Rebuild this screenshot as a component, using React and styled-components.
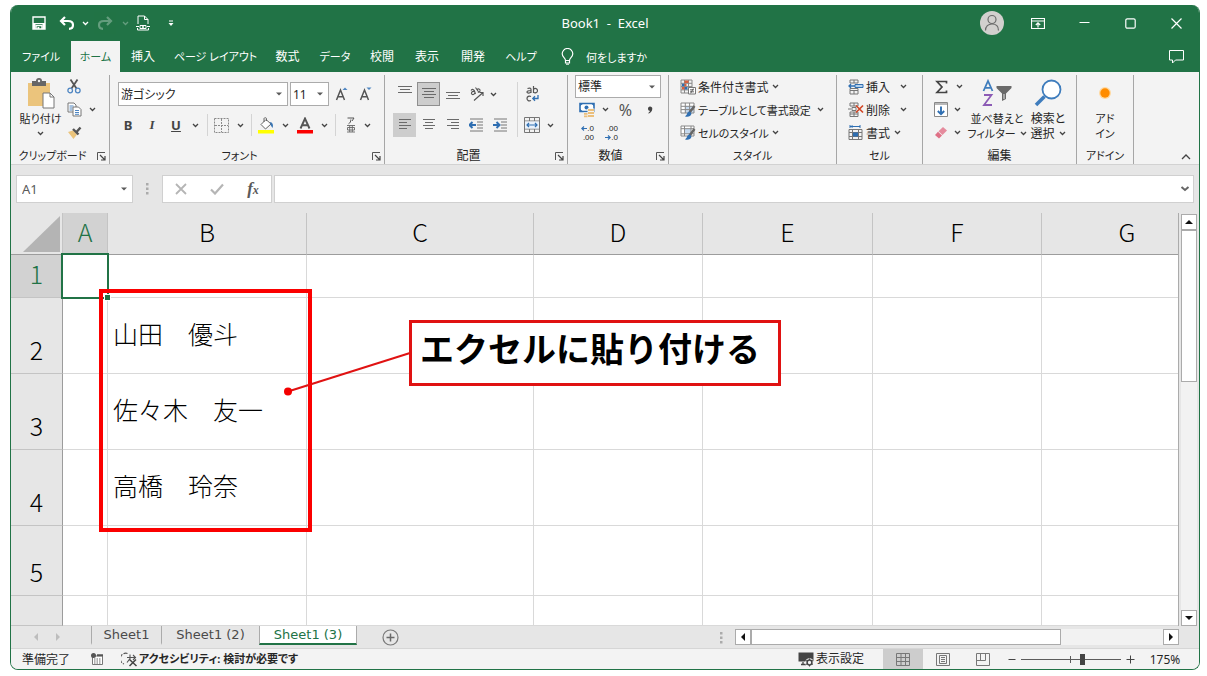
import React from 'react'
import styled, { createGlobalStyle } from 'styled-components';

const GlobalStyle = createGlobalStyle`
    * {
        box-sizing: border-box;
    }

    body {
        margin: 0;
        background: #ffffff;
        font-family: "Noto Sans", "Noto Sans CJK JP", sans-serif;
        font-size: 12px;
        font-feature-settings: "palt";
        color: #262626;
    }

    button, input, select {
        margin: 0;
        padding: 0;
        border: 0;
        background: transparent;
        color: inherit;
        font: inherit;
        font-feature-settings: inherit;
    }

    svg {
        display: block;
        flex: none;
    }
`;

const Window = styled.div`
    margin: 5px 7px 6px 10px;

    border: 1px solid #217346;
    border-top: 0;
    border-radius: 8px;

    background: #e6e6e6;
    overflow: hidden;
`;

/* ---------- title bar ---------- */

const TitleBar = styled.header`
    height: 36px;

    display: grid;
    grid-template-columns: 1fr auto 1fr;
    align-items: center;

    background: #217346;
    color: #ffffff;
`;

const QuickAccess = styled.div`
    padding-left: 16px;

    display: flex;
    align-items: center;
`;

const Title = styled.h1`
    margin: 0;

    font-size: 13px;
    font-weight: 400;
    white-space: pre;
`;

const WindowButtons = styled.div`
    display: flex;
    justify-content: flex-end;
`;

const Tool = styled.button`
    width: ${({ $w }) => $w || 24}px;
    height: ${({ $h }) => $h || 24}px;

    display: flex;
    flex: none;
    align-items: center;
    justify-content: center;

    background: ${({ $on }) => ($on ? '#cdcdcd' : 'transparent')};
    border: ${({ $edge }) => ($edge ? '1px solid #8f8f8f' : '0')};
    opacity: ${({ $dim }) => ($dim ? 0.3 : 1)};
`;

/* ---------- menu tabs ---------- */

const MenuTabs = styled.nav`
    height: 31px;

    display: flex;
    align-items: stretch;

    background: #217346;
    color: #ffffff;
`;

const MenuTab = styled.button`
    width: ${({ $w }) => $w}px;

    flex: none;
    font-size: ${({ $small }) => ($small ? 11 : 12)}px;
    line-height: 29px;
    white-space: nowrap;
    background: ${({ $active }) => ($active ? '#f3f3f3' : 'transparent')};
    color: ${({ $active }) => ($active ? '#217346' : '#ffffff')};
`;

const TellMe = styled.button`
    margin-left: 15px;

    display: flex;
    align-items: center;
    gap: 12px;

    font-size: 11px;
`;

const CommentButton = styled(Tool)`
    margin-left: auto;
`;

/* ---------- ribbon ---------- */

const Ribbon = styled.section`
    height: 93px;
    padding: 3px 0 0;

    display: flex;

    background: #f3f3f3;
    border-bottom: 1px solid #d2d2d2;
`;

const Group = styled.div`
    width: ${({ $w }) => $w}px;

    display: flex;
    flex: none;
    flex-direction: column;
    justify-content: space-between;

    border-right: 1px solid #a6a6a6;
`;

const GroupBody = styled.div`
    height: 70px;
    padding-left: ${({ $left }) => $left || 0}px;

    display: flex;
    flex-direction: ${({ $column }) => ($column ? 'column' : 'row')};
`;

const GroupFooter = styled.div`
    height: 16px;

    display: flex;
    align-items: center;

    font-size: ${({ $small }) => ($small ? 11 : 12)}px;
    line-height: 16px;
    text-align: center;
    white-space: nowrap;

    & > span {
        flex: 1;
    }
`;

const Stack = styled.div`
    padding-top: ${({ $top }) => $top || 0}px;

    display: flex;
    flex-direction: column;
    gap: ${({ $gap }) => $gap || 0}px;
`;

const Row = styled.div`
    padding-left: ${({ $left }) => $left || 0}px;

    display: flex;
    align-items: center;
    gap: ${({ $gap }) => $gap || 0}px;
`;

const Divider = styled.span`
    width: 1px;
    height: ${({ $h }) => $h || 22}px;
    margin: ${({ $m }) => $m || '0 5px'};

    flex: none;
    background: #d4d4d4;
`;

const BigButton = styled.button`
    width: ${({ $w }) => $w}px;
    height: 70px;

    display: flex;
    flex: none;
    flex-direction: column;
    align-items: center;

    font-size: ${({ $small }) => ($small ? 11 : 12)}px;
    line-height: 15px;
    white-space: nowrap;
`;

const BigIcon = styled.span`
    height: 36px;

    display: flex;
    align-items: center;
`;

const Inline = styled.span`
    min-height: 15px;

    display: flex;
    align-items: center;
    gap: 4px;
`;

const LabelButton = styled.button`
    height: 23px;

    display: flex;
    align-items: center;
    gap: 2px;

    font-size: ${({ $small }) => ($small ? 11 : 12)}px;
    white-space: nowrap;

    & > svg:last-child {
        margin-left: ${({ $gap }) => $gap || 1}px;
    }
`;

const Letter = styled.span`
    font-size: 13px;
    font-weight: 700;
    font-style: ${({ $italic }) => ($italic ? 'italic' : 'normal')};
    font-family: ${({ $italic }) => ($italic ? '"Liberation Serif", serif' : '"Noto Sans", sans-serif')};
    text-decoration: ${({ $underline }) => ($underline ? 'underline' : 'none')};
    color: #444444;
`;

const PercentSign = styled.span`
    font-size: 16px;
    color: #555555;
`;

const SelectFrame = styled.span`
    width: ${({ $w }) => $w}px;
    height: ${({ $h }) => $h || 24}px;

    display: grid;
    align-items: center;

    background: #ffffff;
    border: 1px solid ${({ $light }) => ($light ? '#d0d0d0' : '#ababab')};

    & > * {
        grid-area: 1 / 1;
    }

    & > svg {
        margin-right: 5px;
        justify-self: end;
        pointer-events: none;
    }

    select, input {
        width: 100%;
        height: 100%;
        padding-left: ${({ $light }) => ($light ? 5 : 2)}px;
        appearance: none;
        outline: none;
        font-size: ${({ $light }) => ($light ? 13 : 12)}px;
    }
`;

/* ---------- formula bar ---------- */

const FormulaBar = styled.div`
    height: 48px;
    padding: 10px 5px;

    display: flex;
    align-items: stretch;

    color: #5a5a5a;
`;

const FormulaTools = styled.div`
    width: 110px;

    display: flex;
    align-items: center;
    justify-content: space-around;

    background: #ffffff;
    border: 1px solid #d0d0d0;
`;

const FormulaField = styled.div`
    margin-left: 2px;
    padding-right: 3px;

    display: flex;
    flex: 1;
    align-items: center;

    background: #ffffff;
    border: 1px solid #d0d0d0;

    input {
        flex: 1;
        height: 100%;
        outline: none;
    }
`;

const FxLabel = styled.i`
    font-family: "Liberation Serif", serif;
    font-size: 17px;
    font-weight: 700;

    small {
        font-size: 12px;
    }
`;

/* ---------- sheet ---------- */

const SheetArea = styled.main`
    position: relative;

    display: flex;
`;

const SheetView = styled.div`
    flex: 1;
    min-width: 0;

    overflow: hidden;
    border-right: 1px solid #ababab;
`;

const SheetTable = styled.table`
    width: 1202px;

    table-layout: fixed;
    border-collapse: separate;
    border-spacing: 0;

    font-family: "Noto Sans CJK JP", sans-serif;
    font-size: 25px;
    font-weight: 300;
    color: #000000;

    th {
        font-weight: 300;
    }
`;

const ColumnHead = styled.th`
    height: 42px;
    padding: 0 0 4px;

    border-bottom: 1px solid #9c9c9c;
    border-right: 1px solid #c4c4c4;

    line-height: 37px;
    background: ${({ $active }) => ($active ? '#d2d2d2' : '#e6e6e6')};
    color: ${({ $active }) => ($active ? '#217346' : '#000000')};
`;

const CornerHead = styled(ColumnHead)`
    padding: 3px 2px 2px;

    svg {
        margin-left: auto;
    }
`;

const RowHead = styled.th`
    padding: 0 0 6px;

    border-right: 1px solid #9c9c9c;
    border-bottom: 1px solid #c4c4c4;

    line-height: 36px;
    vertical-align: bottom;
    background: ${({ $active }) => ($active ? '#d2d2d2' : '#e6e6e6')};
    color: ${({ $active }) => ($active ? '#217346' : '#000000')};
`;

const SheetRow = styled.tr`
    height: ${({ $h }) => $h}px;
`;

const Cell = styled.td`
    position: relative;
    padding: 0 0 6px 5px;

    background: #ffffff;
    border-right: 1px solid #d9d9d9;
    border-bottom: 1px solid #d9d9d9;

    font-feature-settings: normal;
    line-height: 30px;
    white-space: nowrap;
`;

const Selection = styled.span`
    position: absolute;
    top: -2px;
    right: -2px;
    bottom: -2px;
    left: -2px;
    z-index: 1;

    border: 2px solid #217346;

    &::after {
        content: '';
        position: absolute;
        right: -3px;
        bottom: -3px;

        width: 5px;
        height: 5px;

        background: #217346;
        outline: 1px solid #ffffff;
    }
`;

const Highlight = styled.div`
    position: absolute;
    top: 76px;
    left: 88px;
    z-index: 2;

    width: 213px;
    height: 243px;

    border: 4px solid #fb0000;
`;

const Pointer = styled.svg`
    position: absolute;
    top: 134px;
    left: 272px;
    z-index: 3;
`;

const Callout = styled.div`
    position: absolute;
    top: 107px;
    left: 398px;
    z-index: 3;

    width: 372px;
    padding: 0 0 10px 8px;

    background: #ffffff;
    border: 3px solid #e01212;

    font-family: "Noto Sans CJK JP", sans-serif;
    font-size: 34px;
    font-weight: 700;
    font-feature-settings: normal;
    line-height: 50px;
    white-space: nowrap;
    color: #000000;
`;

const VerticalScroll = styled.div`
    width: 16px;
    margin: 1px 2px 0;

    display: flex;
    flex: none;
    flex-direction: column;

    background: #f2f2f2;
`;

const ScrollButton = styled.button`
    width: 16px;
    height: 16px;

    display: flex;
    flex: none;
    align-items: center;
    justify-content: center;

    background: #ffffff;
    border: 1px solid #ababab;
`;

const ScrollThumb = styled.div`
    background: #ffffff;
    border: 1px solid #ababab;
`;

const VerticalThumb = styled(ScrollThumb)`
    height: 152px;
    margin-bottom: auto;
`;

/* ---------- sheet tabs ---------- */

const SheetTabs = styled.div`
    height: 22px;

    display: flex;
    align-items: flex-start;
`;

const NavArrows = styled.div`
    width: 80px;
    height: 22px;
    padding-left: 14px;

    display: flex;
    align-items: center;
`;

const SheetTab = styled.button`
    width: ${({ $w }) => $w}px;
    height: 19px;

    flex: none;

    background: ${({ $active }) => ($active ? '#ffffff' : 'transparent')};
    border-left: 1px solid #ababab;
    border-right: ${({ $active }) => ($active ? '1px solid #ababab' : '0')};
    border-bottom: 2px solid ${({ $active }) => ($active ? '#217346' : 'transparent')};

    font-family: "DejaVu Sans", sans-serif;
    font-size: 13px;
    line-height: 16px;
    color: ${({ $active }) => ($active ? '#217346' : '#4a4a4a')};
`;

const HorizontalScroll = styled.div`
    width: 444px;
    margin: 3px 20px 0 0;

    display: flex;

    background: #f2f2f2;
`;

const HorizontalThumb = styled(ScrollThumb)`
    width: 310px;
    margin-right: auto;
`;

const SplitDots = styled.span`
    width: 3px;
    margin: 6px 12px 0 auto;
`;

/* ---------- status bar ---------- */

const StatusBar = styled.footer`
    height: 21px;
    padding-left: 11px;

    display: flex;
    align-items: center;

    background: #f3f3f3;
    border-top: 1px solid #d6d6d6;
`;

const StatusText = styled.span`
    width: 69px;
`;

const StatusButton = styled.button`
    margin-left: ${({ $left }) => $left || 0}px;

    display: flex;
    align-items: center;
    gap: 1px;

    font-size: ${({ $bold }) => ($bold ? 11 : 12)}px;
    font-weight: ${({ $bold }) => ($bold ? 700 : 400)};
    line-height: 18px;
    white-space: nowrap;
`;

const StatusRight = styled.div`
    margin-left: auto;
    padding-right: 8px;

    display: flex;
    align-items: center;
`;

const ViewButtons = styled.div`
    margin-left: 19px;

    display: flex;
`;

const ZoomSlider = styled.input`
    width: 100px;
    height: 14px;

    appearance: none;
    background:
        linear-gradient(#5c5c5c, #5c5c5c) 0 7px / 100% 1px no-repeat,
        linear-gradient(#5c5c5c, #5c5c5c) 49px 4px / 1px 7px no-repeat;

    &::-webkit-slider-thumb {
        appearance: none;
        width: 5px;
        height: 11px;
        background: #444444;
    }
`;

const ZoomValue = styled.span`
    width: 52px;

    text-align: center;
`;

/* ---------- icons ---------- */

const Icon = ({ w = 16, h = 16, children, ...rest }) => (
    <svg width={w} height={h} viewBox={`0 0 ${w} ${h}`} fill="none" aria-hidden="true" {...rest}>
        {children}
    </svg>
);

const Caret = ({ color = '#444444' }) => (
    <Icon w={7} h={5}>
        <path d="M1 1l2.5 2.5L6 1" stroke={color} strokeWidth="1.3" />
    </Icon>
);

const SmallArrow = () => (
    <Icon w={6} h={4}>
        <path d="M0 0.5h6L3 3.5z" fill="#5a5a5a" />
    </Icon>
);

const Arrow = ({ dir, color = '#111111' }) => {
    const d = {
        up: 'M4 2l4 4H0z',
        down: 'M0 2h8L4 6z',
        left: 'M6 0v8L2 4z',
        right: 'M2 0v8l4-4z',
    }[dir];
    return <Icon w={8} h={8}><path d={d} fill={color} /></Icon>;
};

const SaveIcon = () => (
    <Icon w={14} h={14}>
        <path d="M1 1h12v12H1z" stroke="#fff" strokeWidth="1.4" />
        <path d="M1 7.500h12" stroke="#fff" strokeWidth="1.2" />
        <path d="M1 8h2.500v5H1zM10.500 8H13v5h-2.500z" fill="#fff" />
        <path d="M4 13V9.500h6V13" stroke="#fff" strokeWidth="1.4" />
        <path d="M5.500 11h1.800v2H5.500z" fill="#fff" />
    </Icon>
);

const UndoIcon = ({ flip }) => (
    <Icon w={16} h={14}>
        <g transform={flip ? 'matrix(-1 0 0 1 16 0)' : undefined} stroke="#fff" strokeWidth="2.200">
            <path d="M6 1L2 5l4 4" />
            <path d="M2 5h7c3.300 0 5 1.500 5 4 0 2.300-1.500 3.800-4 3.800" />
        </g>
    </Icon>
);

const PreviewIcon = () => (
    <Icon w={14} h={16}>
        <path d="M2 9V1h6.500L12 4.500V9M8.500 1v3.500H12" stroke="#fff" />
        <path d="M0 11.500h3M11 11.500h3M1.500 13v2h11v-2" stroke="#fff" />
        <path d="M4 10.500h6v3H4z" stroke="#fff" />
        <circle cx="7" cy="12" r="1" fill="#fff" />
    </Icon>
);

const CustomizeIcon = () => (
    <Icon w={6} h={7}>
        <path d="M1 1h4" stroke="#fff" />
        <path d="M0.500 3h5L3 6z" fill="#fff" />
    </Icon>
);

const AvatarIcon = () => (
    <Icon w={24} h={24}>
        <circle cx="12" cy="12" r="12" fill="#d2d0ce" />
        <circle cx="12" cy="8.500" r="4" stroke="#6b6b6b" strokeWidth="1.200" />
        <path d="M5.500 19.500c0-4.200 2.700-6.500 6.500-6.500s6.500 2.300 6.500 6.500" stroke="#6b6b6b" strokeWidth="1.200" />
    </Icon>
);

const RibbonModeIcon = () => (
    <Icon w={14} h={11}>
        <path d="M0.500 0.500h13v10H0.500zM0.500 3h13" stroke="#fff" strokeWidth="1.200" />
        <path d="M7 9.500V5M4.800 7L7 4.800 9.200 7" stroke="#fff" strokeWidth="1.200" />
    </Icon>
);

const BulbIcon = () => (
    <Icon w={13} h={17}>
        <path d="M4.500 12.500c0-2.500-3.300-3.300-3.300-6.700a5.300 5.300 0 0 1 10.600 0c0 3.400-3.300 4.200-3.300 6.700zM4.500 12.500v2.500h4v-2.500" stroke="#fff" strokeWidth="1.200" />
        <path d="M5 16.200h3" stroke="#fff" />
    </Icon>
);

const CommentIcon = () => (
    <Icon w={15} h={14}>
        <path d="M0.500 0.500h14v9.500H6.500L3.500 13v-3h-3z" stroke="#fff" />
    </Icon>
);

const PasteIcon = () => (
    <Icon w={28} h={31}>
        <path d="M1 5h22v23H1z" fill="#ebc47c" />
        <path d="M5 3h4a3 3 0 0 1 6 0h4v5H5z" fill="#666" />
        <circle cx="12" cy="3" r="1.200" fill="#f3f3f3" />
        <path d="M16 15h7l4 4v11H16z" fill="#fff" stroke="#777" />
        <path d="M23 15v4h4" stroke="#777" />
    </Icon>
);

const CutIcon = () => (
    <Icon w={14} h={15}>
        <path d="M3.500 0.500l6 9M10.500 0.500l-6 9" stroke="#555" strokeWidth="1.800" />
        <circle cx="3.200" cy="11.500" r="2.300" stroke="#4f86c2" strokeWidth="1.300" />
        <circle cx="10.800" cy="11.500" r="2.300" stroke="#4f86c2" strokeWidth="1.300" />
    </Icon>
);

const CopyIcon = () => (
    <Icon w={15} h={15}>
        <path d="M1 1h6l2 2v7H1z" fill="#fff" stroke="#777" />
        <path d="M2.500 4h4M2.500 6h3M2.500 8h3" stroke="#4f86c2" />
        <path d="M6 5h5.500L14 7.500V14H6z" fill="#fff" stroke="#777" />
        <path d="M8 8.500h4M8 10.500h4M8 12.300h4" stroke="#4f86c2" />
    </Icon>
);

const BrushIcon = () => (
    <Icon w={15} h={13}>
        <path d="M1 6l5-1.500 4 4L6.500 13z" fill="#ebc47c" />
        <path d="M6 3l5.500 5.500M9.500 6L13.500 1.500" stroke="#555" strokeWidth="2.400" />
    </Icon>
);

const LauncherIcon = () => (
    <Icon w={9} h={9}>
        <path d="M0.500 8V0.500H8" stroke="#555" />
        <path d="M3 3l4.500 4.500M8 4v4H4" stroke="#444" strokeWidth="1.200" />
    </Icon>
);

const GrowFontIcon = ({ down }) => (
    <Icon w={14} h={16}>
        <path d="M1.500 14L5.500 4l4 10M3 10.800h5" stroke="#555" strokeWidth="1.500" />
        <path d={down ? 'M7.500 1.500h5L10 4z' : 'M7.500 4h5L10 1.500z'} fill="#4f86c2" />
    </Icon>
);

const BordersIcon = () => (
    <Icon w={15} h={15}>
        <path d="M0.500 0.500h14v14H0.500zM7.500 1v13M1 7.500h13" stroke="#8a8a8a" strokeDasharray="2 1" />
    </Icon>
);

const FillIcon = () => (
    <Icon w={17} h={17}>
        <path d="M3 7.500L8 2.500l5 4.500-5.500 5z" fill="#fff" stroke="#666" />
        <path d="M6 5V1.500c0-1 2.500-1 2.500 0V4" stroke="#666" />
        <path d="M12 5c3 .5 3.500 3.500 2.500 6l-2-3z" fill="#3b76b4" />
        <path d="M0 13h16v3.500H0z" fill="#ffff00" />
    </Icon>
);

const FontColorIcon = () => (
    <Icon w={16} h={17}>
        <path d="M3.500 11.500L8 1.500l4.500 10M5 8.200h6" stroke="#555" strokeWidth="1.900" />
        <path d="M0 13h16v3.500H0z" fill="#fb0000" />
    </Icon>
);

const RubyIcon = () => (
    <Icon w={10} h={16}>
        <path d="M1.500 1h6.500L6 4M4.800 2.500c0 2-.5 3.500-2.300 4.300" stroke="#555" />
        <path d="M1 8.500h8M1 15h8M3.700 8.500V15M6.300 8.500V15M1.500 10.500h7v2.500h-7z" stroke="#666" strokeWidth="0.900" />
    </Icon>
);

const LinesIcon = ({ rows, align }) => (
    <Icon w={14} h={rows.length * 3 + 1}>
        {rows.map((len, i) => {
            const x = align === 'left' ? 1 : align === 'right' ? 13 - len : (14 - len) / 2;
            return <path key={i} d={`M${x} ${i * 3 + 0.5}h${len}`} stroke="#6a6a6a" />;
        })}
    </Icon>
);

const OrientationIcon = () => (
    <Icon w={16} h={16}>
        <path d="M2 4.500c1.500-2 3-1 3.500.5L6.500 8M5.500 5.500C3 5 1.500 7 3 8.300c1.200.9 2.800-.3 2.700-1.700M6.500 1.500l3.500 5M8 4c1-2 3.500-1 3 1-.3 1-1.500 1.500-2 1" stroke="#555" strokeWidth="1.100" />
        <path d="M5 14.500l9-8M10.500 6.500H14V10" stroke="#555" strokeWidth="1.200" />
    </Icon>
);

const IndentIcon = ({ inward }) => (
    <Icon w={15} h={14}>
        <path d="M1 1h13M8 4h6M8 7h6M8 10h6M1 13h13" stroke="#777" />
        <path d={inward ? 'M0 7h6M3.500 4L6.500 7l-3 3' : 'M1 7h6M3.500 4L0.500 7l3 3'} stroke="#2f6fb2" strokeWidth="2" />
    </Icon>
);

const WrapIcon = () => (
    <Icon w={13} h={16}>
        <g stroke="#555" strokeWidth="1.200">
            <path d="M1.500 2.500c3-1 3.500 0 3.500 1V7M5 4.500c-3 0-4 .5-4 1.500 0 1.500 3 1.300 4 0M7.500 0v7M7.500 3.500c1.500-2 4-.8 4 1.200s-2.500 2.800-4 1.500" />
            <path d="M5 10.500c-2-1-4 0-4 2s2 3 4 2" />
        </g>
        <path d="M12 9v3.500H7M9 10.300L6.800 12.500 9 14.700" stroke="#2f6fb2" strokeWidth="1.300" />
    </Icon>
);

const MergeIcon = () => (
    <Icon w={16} h={16}>
        <path d="M0.500 0.500h15v15H0.500zM0.500 4h15M0.500 12h15M5.500 0.500V4M10.500 0.500V4M5.500 12v3.500M10.500 12v3.500" stroke="#777" />
        <path d="M1 4.500h14v7H1z" fill="#eaf2fb" />
        <path d="M3 8h10M5 6L3 8l2 2M11 6l2 2-2 2" stroke="#2f6fb2" strokeWidth="1.200" />
    </Icon>
);

const CurrencyIcon = () => (
    <Icon w={16} h={16}>
        <path d="M1 1.500h14v8H1z" fill="#fff" stroke="#2f6fb2" strokeWidth="1.600" />
        <path d="M1 1.500h3.500L1 4zM15 1.500v2.500l-3-2.500zM1 9.500V7l3 2.500z" fill="#2f6fb2" />
        <circle cx="7.500" cy="5.500" r="2" fill="#2f6fb2" />
        <path d="M8.500 6.500h7V16h-7zM4.500 10.500h4V16h-4z" fill="#f3f3f3" />
        <path d="M9 7h6v2H9zM9 10h6v2H9zM9 13h6v2H9zM5 11h3.500v1.800H5zM5 13.500h3.500v1.800H5z" fill="#ebbf7c" />
    </Icon>
);

const CommaIcon = () => (
    <Icon w={6} h={8}>
        <path d="M3 0.500c1.500 0 2.300 1 2.300 2.200C5.300 5 3.500 7 1.500 7.500L1.200 7C2.300 6.300 3 5.500 3 4.800 1.800 4.900 1 4 1 2.700 1 1.500 1.800 0.500 3 0.500z" fill="#444" />
    </Icon>
);

const DecimalText = styled.span`
    width: 14px;

    display: flex;
    flex-direction: column;
    align-items: flex-end;

    font-family: "Liberation Sans", sans-serif;
    font-size: 8px;
    line-height: 9px;
`;

const DecimalLine = styled.span`
    height: 9px;

    display: flex;
    align-items: center;
`;

const TinyArrow = ({ right }) => (
    <Icon w={6} h={5}>
        <path d={right ? 'M0 2.500h5M3 0.500l2.200 2L3 4.500' : 'M6 2.500H1M3 0.500L0.800 2.500l2.200 2'} stroke="#2f6fb2" strokeWidth="1.200" />
    </Icon>
);

const ConditionalIcon = () => (
    <Icon w={16} h={16}>
        <path d="M1 1h11v13H1zM1 4.300h11M1 7.600h11M1 10.900h11M4.500 1v13M8.500 1v13" stroke="#888" />
        <path d="M4.500 1.500h4v2.500h-4z" fill="#d9603f" />
        <path d="M2 4.700h2.500v2.500H2zM4.500 8h3v2.500h-3z" fill="#2f6fb2" />
        <path d="M2 8h2.500v2.500H2zM4.500 4.700h2v2.500h-2z" fill="#d9603f" />
        <path d="M8.500 8.500h7v6.500h-7z" fill="#fff" stroke="#777" />
        <path d="M10 10.800h4M10 12.800h4M13.300 9.500l-2.600 4.800" stroke="#555" strokeWidth="0.900" />
    </Icon>
);

const TableStyleIcon = ({ single }) => (
    <Icon w={16} h={16}>
        <path d="M1 1h13v10H1z" fill="#fff" />
        <path d={single ? 'M4.500 4h6.500v5H4.500z' : 'M5 4h9v7H5z'} fill="#c5d9ee" />
        <path d={single ? 'M1 1h13v10H1zM1 3.700h13M1 8.800h13M4.500 1v10M11 1v10' : 'M1 1h13v10H1zM1 4.300h13M1 7.600h13M5.300 1v10M9.600 1v10'} stroke="#888" />
        <path d="M14.500 4L9.500 10.500" stroke="#666" strokeWidth="2.400" />
        <path d="M10 9.500c-2 0-3 1.500-3.200 3L5 14.500c3 .8 6 0 6.500-3z" fill="#2f6fb2" />
    </Icon>
);

const InsertCellIcon = () => (
    <Icon w={16} h={16}>
        <path d="M2 1h8v3H2zM6 1v3M2 11.500h8v3.500H2zM6 11.500V15M2 11.500V9.500h8v2" stroke="#777" />
        <path d="M7 5.500h8v3H7z" fill="#b5d0ea" stroke="#2f6fb2" />
        <path d="M7 7H1M3 5L1 7l2 2" stroke="#2f6fb2" strokeWidth="1.300" />
    </Icon>
);

const DeleteCellIcon = () => (
    <Icon w={16} h={16}>
        <path d="M2 1h8v3H2zM6 1v3M4 5.500h4v3H4zM2 10h8v4.500H2zM6 10v4.500M2 12h8" stroke="#777" />
        <path d="M0 7h3" stroke="#777" />
        <path d="M8 3.500l7 7M15 3.500l-7 7" stroke="#d24726" strokeWidth="1.700" />
    </Icon>
);

const FormatCellIcon = () => (
    <Icon w={16} h={16}>
        <path d="M2 1.500h10M2 0v3M12 0v3M4.500 0.500L3 1.500l1.500 1" stroke="#2f6fb2" />
        <path d="M1 4.500h13v10H1zM4.500 4.500v10M10.500 4.500v10M1 7.500h13M1 11.500h13" stroke="#777" />
        <path d="M5 7.500h5v4H5z" fill="#2f6fb2" />
    </Icon>
);

const SigmaIcon = () => (
    <Icon w={13} h={14}>
        <path d="M11.500 3.500V1.500H2L7 7l-5 5.500h9.500v-2" stroke="#444" strokeWidth="1.700" />
    </Icon>
);

const FillDownIcon = () => (
    <Icon w={14} h={15}>
        <path d="M0.500 0.500h13v14H0.500z" fill="#fff" stroke="#888" />
        <path d="M1 1h12v2H1z" fill="#b8b8b8" />
        <path d="M7 4.500v7.500M3.800 9L7 12.200 10.200 9" stroke="#2f6fb2" strokeWidth="1.900" />
    </Icon>
);

const EraserIcon = () => (
    <Icon w={14} h={13}>
        <path d="M9 1l4 3.500L8.500 9l-4-3.700z" fill="#e58b9d" />
        <path d="M4 5.800L8 9.500l-3 3L1 9z" fill="#df7086" />
    </Icon>
);

const SortFilterIcon = () => (
    <Icon w={30} h={28}>
        <path d="M1.500 12L6 2l4.500 10M3 8.800h6" stroke="#3f7dbd" strokeWidth="1.800" />
        <path d="M2 16h7.500L2 26h8" stroke="#8c5bb5" strokeWidth="1.800" />
        <path d="M14.500 7h15v2l-5.500 5.500V20l-4 2v-7.500L14.500 9z" fill="#6a6a6a" />
        <path d="M22 15v5" stroke="#e6e6e6" />
    </Icon>
);

const FindIcon = () => (
    <Icon w={28} h={28}>
        <circle cx="17.500" cy="10.500" r="9" fill="#fff" stroke="#3f7dbd" strokeWidth="1.800" />
        <path d="M10.500 17.500L2 26" stroke="#3f7dbd" strokeWidth="3.600" />
    </Icon>
);

const AddinIcon = () => (
    <Icon w={14} h={14}>
        <circle cx="7" cy="7" r="6" fill="#ffd9a0" />
        <circle cx="7" cy="7" r="4.700" fill="#ff8c00" />
    </Icon>
);

const Dots = () => (
    <Icon w={3} h={12}>
        <path d="M0 0h2.500v2.500H0zM0 4.500h2.500V7H0zM0 9h2.500v2.500H0z" fill="#ababab" />
    </Icon>
);

const AddSheetIcon = () => (
    <Icon w={17} h={17}>
        <circle cx="8.500" cy="8.500" r="7.500" stroke="#7a7a7a" strokeWidth="1.200" />
        <path d="M8.500 4.500v8M4.500 8.500h8" stroke="#6a6a6a" strokeWidth="1.500" />
    </Icon>
);

const MacroIcon = () => (
    <Icon w={13} h={12}>
        <path d="M1.500 3h10v8.500h-10z" fill="#fff" stroke="#777" />
        <path d="M6 2.200h6" stroke="#555" strokeWidth="2" />
        <path d="M3 6h7.500M3 8h7.500M3 10h7.500" stroke="#666" strokeDasharray="1.500 1" />
        <circle cx="2.500" cy="2.500" r="2.500" fill="#555" />
    </Icon>
);

const AccessIcon = () => (
    <Icon w={17} h={15}>
        <path d="M6.500 1.500A5.500 5.500 0 0 0 3 12" stroke="#555" strokeWidth="1.200" strokeDasharray="4 1.200" />
        <path d="M6 5.500h8M9 2.500v4l-3 4M12 3l2.500 2.500L12 8" stroke="#555" strokeWidth="1.100" />
        <path d="M8.500 7.500l7 6.500M15 7.500L8.500 14" stroke="#444" strokeWidth="1.500" />
    </Icon>
);

const DisplayIcon = () => (
    <Icon w={17} h={15}>
        <path d="M0.500 0.500h15v9H0.500z" fill="#444" />
        <path d="M3 12.500h5M5 10v2.500" stroke="#444" strokeWidth="1.300" />
        <circle cx="11.500" cy="10.500" r="4.300" fill="#f3f3f3" />
        <circle cx="11.500" cy="10.500" r="2.400" stroke="#444" strokeWidth="1.500" />
        <path d="M11.500 6.500v8M8 8.500l7 4M15 8.500l-7 4" stroke="#444" strokeDasharray="1.500 5" />
    </Icon>
);

const NormalViewIcon = () => (
    <Icon w={14} h={13}>
        <path d="M0.500 0.500h13v12H0.500zM5 0.500v12M9.500 0.500v12M0.500 4.500h13M0.500 8.500h13" stroke="#777" />
    </Icon>
);

const PageViewIcon = () => (
    <Icon w={14} h={13}>
        <path d="M0.500 0.500h13v12H0.500zM3.500 2.500h7v8h-7zM5 4.500h4M5 6.500h4M5 8.500h4" stroke="#777" />
    </Icon>
);

const BreakViewIcon = () => (
    <Icon w={14} h={13}>
        <path d="M0.500 0.500h13v12H0.500zM4.500 0.500v7M9.500 0.500v7M0.500 7.500h9" stroke="#777" />
    </Icon>
);

const menus = [
    { label: 'ファイル', w: 60, small: true },
    { label: 'ホーム', w: 49, small: true },
    { label: '挿入', w: 46 },
    { label: 'ページ レイアウト', w: 99, small: true },
    { label: '数式', w: 45 },
    { label: 'データ', w: 50, small: true },
    { label: '校閲', w: 44 },
    { label: '表示', w: 46 },
    { label: '開発', w: 46 },
    { label: 'ヘルプ', w: 50, small: true },
];

const columns = ['A', 'B', 'C', 'D', 'E', 'F', 'G'];
const columnWidths = [52, 45, 199, 227, 169, 170, 169, 171];

const rows = [
    { no: 1, h: 43 },
    { no: 2, h: 76, name: '山田　優斗' },
    { no: 3, h: 76, name: '佐々木　友一' },
    { no: 4, h: 76, name: '高橋　玲奈' },
    { no: 5, h: 70 },
    { no: '', h: 30 },
];

const Footer = ({ label, launcher, small }) => (
    <GroupFooter $small={small}>
        <span>{label}</span>
        {launcher && <Tool $w={15} $h={16} aria-label={`${label}の設定`}><LauncherIcon /></Tool>}
    </GroupFooter>
);

const CollapseButton = styled(Tool)`
    margin: auto 1px 0 auto;
`;

const RibbonArea = () => (
    <Ribbon>
        <Group $w={99}>
            <GroupBody $left={8}>
                <BigButton $w={43} $small>
                    <BigIcon><PasteIcon /></BigIcon>
                    <span>貼り付け</span>
                    <Inline><Caret /></Inline>
                </BigButton>
                <Stack>
                    <Tool $h={23} aria-label="切り取り"><CutIcon /></Tool>
                    <Row>
                        <Tool $h={23} aria-label="コピー"><CopyIcon /></Tool>
                        <Tool $w={12} $h={23} aria-label="コピーのオプション"><Caret /></Tool>
                    </Row>
                    <Tool $h={23} aria-label="書式のコピー"><BrushIcon /></Tool>
                </Stack>
            </GroupBody>
            <Footer label="クリップボード" launcher small />
        </Group>

        <Group $w={275}>
            <GroupBody $left={6}>
                <Stack $top={7} $gap={7}>
                    <Row $gap={2} $left={2}>
                        <SelectFrame $w={170}>
                            <select aria-label="フォント"><option>游ゴシック</option></select>
                            <SmallArrow />
                        </SelectFrame>
                        <SelectFrame $w={39}>
                            <select aria-label="フォント サイズ"><option>11</option></select>
                            <SmallArrow />
                        </SelectFrame>
                        <Tool $w={22} aria-label="拡大"><GrowFontIcon /></Tool>
                        <Tool $w={22} aria-label="縮小"><GrowFontIcon down /></Tool>
                    </Row>
                    <Row>
                        <Tool><Letter>B</Letter></Tool>
                        <Tool><Letter $italic>I</Letter></Tool>
                        <Tool><Letter $underline>U</Letter></Tool>
                        <Tool $w={14} aria-label="下線"><Caret /></Tool>
                        <Divider />
                        <Tool $w={17} aria-label="罫線"><BordersIcon /></Tool>
                        <Tool $w={20} aria-label="罫線の種類"><Caret /></Tool>
                        <Divider $m="0 1px" />
                        <Tool $w={26} aria-label="塗りつぶし"><FillIcon /></Tool>
                        <Tool $w={12} aria-label="塗りつぶしの色"><Caret /></Tool>
                        <Tool $w={27} aria-label="文字色"><FontColorIcon /></Tool>
                        <Tool $w={12} aria-label="文字色の選択"><Caret /></Tool>
                        <Divider />
                        <Tool $w={20} aria-label="ふりがな"><RubyIcon /></Tool>
                        <Tool $w={12} aria-label="ふりがなの設定"><Caret /></Tool>
                    </Row>
                </Stack>
            </GroupBody>
            <Footer label="フォント" launcher small />
        </Group>

        <Group $w={183}>
            <GroupBody $left={8}>
                <Stack $top={7} $gap={7}>
                    <Row $gap={1}>
                        <Tool $w={23} aria-label="上揃え"><LinesIcon rows={[14, 10, 14, 0, 0]} /></Tool>
                        <Tool $w={23} $on $edge aria-label="上下中央揃え"><LinesIcon rows={[14, 10, 14, 10]} /></Tool>
                        <Tool $w={23} aria-label="下揃え"><LinesIcon rows={[0, 0, 14, 10, 14]} /></Tool>
                        <Tool $w={23} aria-label="方向"><OrientationIcon /></Tool>
                        <Tool $w={8} aria-label="方向の設定"><Caret /></Tool>
                    </Row>
                    <Row $gap={1}>
                        <Tool $w={23} $on aria-label="左揃え"><LinesIcon rows={[12, 8, 12, 8]} align="left" /></Tool>
                        <Tool $w={23} aria-label="中央揃え"><LinesIcon rows={[12, 8, 12, 8]} /></Tool>
                        <Tool $w={23} aria-label="右揃え"><LinesIcon rows={[12, 8, 12, 8]} align="right" /></Tool>
                        <Tool $w={23} aria-label="インデントを減らす"><IndentIcon /></Tool>
                        <Tool $w={23} aria-label="インデントを増やす"><IndentIcon inward /></Tool>
                    </Row>
                </Stack>
                <Divider $h={55} $m="7px 2px 0 5px" />
                <Stack $top={7} $gap={7}>
                    <Tool aria-label="折り返し"><WrapIcon /></Tool>
                    <Row>
                        <Tool aria-label="セルの結合"><MergeIcon /></Tool>
                        <Tool $w={12} aria-label="結合の設定"><Caret /></Tool>
                    </Row>
                </Stack>
            </GroupBody>
            <Footer label="配置" launcher />
        </Group>

        <Group $w={101}>
            <GroupBody $left={7}>
                <Stack>
                    <SelectFrame $w={86} $h={23}>
                        <select aria-label="数値の書式"><option>標準</option></select>
                        <SmallArrow />
                    </SelectFrame>
                    <Row>
                        <Tool $h={23} aria-label="通貨"><CurrencyIcon /></Tool>
                        <Tool $w={12} $h={23} aria-label="通貨の種類"><Caret /></Tool>
                        <Tool $w={29} $h={23}><PercentSign>%</PercentSign></Tool>
                        <Tool $w={20} $h={23} aria-label="桁区切り"><CommaIcon /></Tool>
                    </Row>
                    <Row>
                        <Tool aria-label="小数点以下の表示桁数を増やす">
                            <DecimalText>
                                <DecimalLine><TinyArrow />.0</DecimalLine>
                                <DecimalLine>.00</DecimalLine>
                            </DecimalText>
                        </Tool>
                        <Tool aria-label="小数点以下の表示桁数を減らす">
                            <DecimalText>
                                <DecimalLine>.00</DecimalLine>
                                <DecimalLine><TinyArrow right />.0</DecimalLine>
                            </DecimalText>
                        </Tool>
                    </Row>
                </Stack>
            </GroupBody>
            <Footer label="数値" launcher />
        </Group>

        <Group $w={168}>
            <GroupBody $left={11} $column>
                <LabelButton><ConditionalIcon />条件付き書式<Caret /></LabelButton>
                <LabelButton $small $gap={4}><TableStyleIcon />テーブルとして書式設定<Caret /></LabelButton>
                <LabelButton $small><TableStyleIcon single />セルのスタイル<Caret /></LabelButton>
            </GroupBody>
            <Footer label="スタイル" small />
        </Group>

        <Group $w={86}>
            <GroupBody $left={11} $column>
                <LabelButton $gap={8}><InsertCellIcon />挿入<Caret /></LabelButton>
                <LabelButton $gap={8}><DeleteCellIcon />削除<Caret /></LabelButton>
                <LabelButton $gap={2}><FormatCellIcon />書式<Caret /></LabelButton>
            </GroupBody>
            <Footer label="セル" small />
        </Group>

        <Group $w={154}>
            <GroupBody $left={6}>
                <Stack>
                    <Row>
                        <Tool $h={23} aria-label="合計"><SigmaIcon /></Tool>
                        <Tool $w={12} $h={23} aria-label="合計の種類"><Caret /></Tool>
                    </Row>
                    <Row>
                        <Tool $h={23} aria-label="フィル"><FillDownIcon /></Tool>
                        <Tool $w={8} $h={23} aria-label="フィルの種類"><Caret /></Tool>
                    </Row>
                    <Row>
                        <Tool $h={23} aria-label="クリア"><EraserIcon /></Tool>
                        <Tool $w={8} $h={23} aria-label="クリアの種類"><Caret /></Tool>
                    </Row>
                </Stack>
                <BigButton $w={64} $small>
                    <BigIcon><SortFilterIcon /></BigIcon>
                    <span>並べ替えと</span>
                    <Inline>フィルター<Caret /></Inline>
                </BigButton>
                <BigButton $w={38}>
                    <BigIcon><FindIcon /></BigIcon>
                    <span>検索と</span>
                    <Inline>選択<Caret /></Inline>
                </BigButton>
            </GroupBody>
            <Footer label="編集" />
        </Group>

        <Group $w={57}>
            <GroupBody>
                <BigButton $w={56} $small>
                    <BigIcon><AddinIcon /></BigIcon>
                    <span>アド</span>
                    <span>イン</span>
                </BigButton>
            </GroupBody>
            <Footer label="アドイン" small />
        </Group>

        <CollapseButton $w={24} $h={14} aria-label="リボンを折りたたむ">
            <Icon w={10} h={6}><path d="M1 5l4-4 4 4" stroke="#444" strokeWidth="1.300" /></Icon>
        </CollapseButton>
    </Ribbon>
);

const App = () => (
    <>
        <GlobalStyle />
        <Window>
            <TitleBar>
                <QuickAccess>
                    <Tool aria-label="保存"><SaveIcon /></Tool>
                    <Tool $w={32} aria-label="元に戻す"><UndoIcon /></Tool>
                    <Tool $w={4} aria-label="元に戻す履歴"><Caret color="#ffffff" /></Tool>
                    <Tool $w={36} $dim aria-label="やり直し"><UndoIcon flip /></Tool>
                    <Tool $w={4} $dim aria-label="やり直し履歴"><Caret color="#ffffff" /></Tool>
                    <Tool $w={32} aria-label="印刷プレビュー"><PreviewIcon /></Tool>
                    <Tool aria-label="カスタマイズ"><CustomizeIcon /></Tool>
                </QuickAccess>
                <Title>{'Book1  -  Excel'}</Title>
                <WindowButtons>
                    <Tool $w={46} aria-label="アカウント"><AvatarIcon /></Tool>
                    <Tool $w={46} aria-label="リボンの表示"><RibbonModeIcon /></Tool>
                    <Tool $w={46} aria-label="最小化">
                        <Icon w={11} h={11}><path d="M0.500 4.500h10" stroke="#fff" strokeWidth="1.200" /></Icon>
                    </Tool>
                    <Tool $w={46} aria-label="最大化">
                        <Icon w={11} h={11}><rect x="0.800" y="0.800" width="9.400" height="9.400" rx="1.500" stroke="#fff" strokeWidth="1.200" /></Icon>
                    </Tool>
                    <Tool $w={46} aria-label="閉じる">
                        <Icon w={11} h={11}><path d="M0.500 0.500l10 10M10.500 0.500l-10 10" stroke="#fff" strokeWidth="1.200" /></Icon>
                    </Tool>
                </WindowButtons>
            </TitleBar>

            <MenuTabs>
                {menus.map(({ label, w, small }) => (
                    <MenuTab key={label} $w={w} $small={small} $active={label === 'ホーム'}>{label}</MenuTab>
                ))}
                <TellMe><BulbIcon />何をしますか</TellMe>
                <CommentButton $w={46} $h={31} aria-label="コメント"><CommentIcon /></CommentButton>
            </MenuTabs>

            <RibbonArea />

            <FormulaBar>
                <SelectFrame $w={117} $h={28} $light>
                    <input aria-label="名前ボックス" defaultValue="A1" />
                    <SmallArrow />
                </SelectFrame>
                <Tool $w={29} $h={28} aria-label="区切り"><Dots /></Tool>
                <FormulaTools>
                    <Tool aria-label="キャンセル">
                        <Icon w={12} h={12}><path d="M1 1l10 10M11 1L1 11" stroke="#b5b5b5" strokeWidth="1.800" /></Icon>
                    </Tool>
                    <Tool aria-label="入力">
                        <Icon w={14} h={12}><path d="M1 6.500l4 4L13 1.500" stroke="#b5b5b5" strokeWidth="2.200" /></Icon>
                    </Tool>
                    <Tool aria-label="関数の挿入"><FxLabel>f<small>x</small></FxLabel></Tool>
                </FormulaTools>
                <FormulaField>
                    <input aria-label="数式バー" />
                    <Icon w={10} h={6}><path d="M1.500 1L5 4l3.500-3" stroke="#666" strokeWidth="2" /></Icon>
                </FormulaField>
            </FormulaBar>

            <SheetArea>
                <SheetView>
                    <SheetTable>
                        <colgroup>
                            {columnWidths.map((w, i) => <col key={i} width={w} />)}
                        </colgroup>
                        <thead>
                            <tr>
                                <CornerHead>
                                    <Icon w={37} h={36}><path d="M37 0v36H0z" fill="#b4b4b4" /></Icon>
                                </CornerHead>
                                {columns.map((name) => (
                                    <ColumnHead key={name} scope="col" $active={name === 'A'}>{name}</ColumnHead>
                                ))}
                            </tr>
                        </thead>
                        <tbody>
                            {rows.map(({ no, h, name }) => (
                                <SheetRow key={no} $h={h}>
                                    <RowHead scope="row" $active={no === 1}>{no}</RowHead>
                                    {columns.map((col) => (
                                        <Cell key={col}>
                                            {col === 'A' && no === 1 && <Selection />}
                                            {col === 'B' && name}
                                        </Cell>
                                    ))}
                                </SheetRow>
                            ))}
                        </tbody>
                    </SheetTable>
                </SheetView>
                <VerticalScroll>
                    <ScrollButton aria-label="上へ"><Arrow dir="up" /></ScrollButton>
                    <VerticalThumb />
                    <ScrollButton aria-label="下へ"><Arrow dir="down" /></ScrollButton>
                </VerticalScroll>

                <Highlight />
                <Pointer width="128" height="52" aria-hidden="true">
                    <path d="M5 44.500L127 6" stroke="#e01212" strokeWidth="2" />
                    <circle cx="5" cy="44.500" r="4" fill="#f40000" />
                </Pointer>
                <Callout>エクセルに貼り付ける</Callout>
            </SheetArea>

            <SheetTabs>
                <NavArrows>
                    <Tool $w={22} $h={20} aria-label="前のシート"><Arrow dir="left" color="#bdbdbd" /></Tool>
                    <Tool $w={22} $h={20} aria-label="次のシート"><Arrow dir="right" color="#bdbdbd" /></Tool>
                </NavArrows>
                <SheetTab $w={70}>Sheet1</SheetTab>
                <SheetTab $w={98}>Sheet1 (2)</SheetTab>
                <SheetTab $w={98} $active>Sheet1 (3)</SheetTab>
                <Tool $w={66} $h={22} aria-label="新しいシート"><AddSheetIcon /></Tool>
                <SplitDots><Dots /></SplitDots>
                <HorizontalScroll>
                    <ScrollButton aria-label="左へ"><Arrow dir="left" /></ScrollButton>
                    <HorizontalThumb />
                    <ScrollButton aria-label="右へ"><Arrow dir="right" /></ScrollButton>
                </HorizontalScroll>
            </SheetTabs>

            <StatusBar>
                <StatusText>準備完了</StatusText>
                <StatusButton aria-label="マクロの記録"><MacroIcon /></StatusButton>
                <StatusButton $left={17} $bold><AccessIcon />アクセシビリティ: 検討が必要です</StatusButton>
                <StatusRight>
                    <StatusButton><DisplayIcon />表示設定</StatusButton>
                    <ViewButtons>
                        <Tool $w={40} $h={20} $on aria-label="標準"><NormalViewIcon /></Tool>
                        <Tool $w={40} $h={20} aria-label="ページ レイアウト"><PageViewIcon /></Tool>
                        <Tool $w={40} $h={20} aria-label="改ページ プレビュー"><BreakViewIcon /></Tool>
                    </ViewButtons>
                    <Tool $w={18} $h={20} aria-label="縮小">
                        <Icon w={9} h={9}><path d="M0.500 4.500h7" stroke="#444" /></Icon>
                    </Tool>
                    <ZoomSlider type="range" min="0" max="100" defaultValue="62" aria-label="ズーム" />
                    <Tool $w={18} $h={20} aria-label="拡大">
                        <Icon w={9} h={9}><path d="M0.500 4.500h8M4.500 0.500v8" stroke="#444" /></Icon>
                    </Tool>
                    <ZoomValue>175%</ZoomValue>
                </StatusRight>
            </StatusBar>
        </Window>
    </>
);

export default App;
